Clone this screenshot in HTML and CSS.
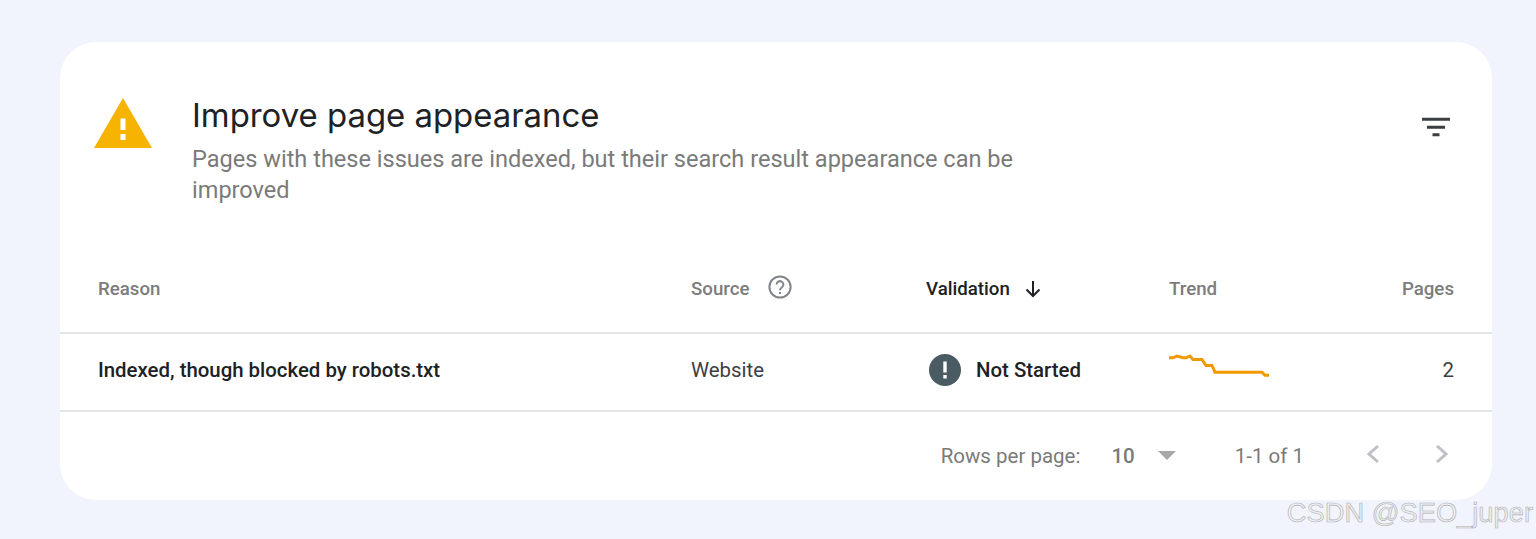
FILE: index.html
```html
<!DOCTYPE html>
<html lang="en">
<head>
<meta charset="utf-8">
<title>Improve page appearance</title>
<link rel="stylesheet" href="styles.css">
</head>
<body>
<main class="card">
  <header class="head">
    <svg class="warn" viewBox="0 0 58 50" aria-hidden="true"><path d="M29 0 58 50H0Z" fill="#f6b400"/><path d="M26.500 20.500h5v11.500h-5zM26.500 36h5v6h-5z" fill="#fff"/></svg>
    <div class="head-text">
      <h1 class="title">Improve page appearance</h1>
      <p class="sub">Pages with these issues are indexed, but their search result appearance can be improved</p>
    </div>
    <svg class="filter" viewBox="0 0 30 20" aria-hidden="true"><path d="M1 2.200h28M6 10.200h18M11.500 17.800h7" stroke="#3c4043" stroke-width="3" fill="none"/></svg>
  </header>
  <div class="row row-head">
    <div class="c-reason">Reason</div>
    <div class="c-source">Source
      <svg class="help" viewBox="0 0 24 24" aria-hidden="true"><circle cx="12" cy="12" r="10.600" fill="none" stroke="#80868b" stroke-width="2"/><path d="M8.600 9.500a3.400 3.400 0 1 1 5.400 2.800c-1.300.9-2 1.500-2 3" fill="none" stroke="#80868b" stroke-width="2"/><path d="M11 17h2v2h-2z" fill="#80868b"/></svg>
    </div>
    <div class="c-valid sorted">Validation
      <svg class="arrow" viewBox="0 0 18 18" aria-hidden="true"><path d="M9 1v15M2.500 9.500 9 16l6.500-6.500" fill="none" stroke="#202124" stroke-width="2"/></svg>
    </div>
    <div class="c-trend">Trend</div>
    <div class="c-pages">Pages</div>
  </div>
  <div class="row row-body">
    <div class="c-reason strong">Indexed, though blocked by robots.txt</div>
    <div class="c-source">Website</div>
    <div class="c-valid status">
      <svg class="state" viewBox="0 0 32 32" aria-hidden="true"><circle cx="16" cy="16" r="16" fill="#4a5b64"/><path d="M14.300 7.500h3.400v11h-3.400zM14.300 21h3.400v3.500h-3.400z" fill="#fff"/></svg>
      <span>Not Started</span>
    </div>
    <div class="c-trend">
      <svg class="spark" viewBox="0 0 102 24" aria-hidden="true"><path d="M0 3.800H4L8 2 14 3.800H17L21 2 24 5.500H33L37 11.500H43L46 18.200H93L96 21.200H100" fill="none" stroke="#f29900" stroke-width="3"/></svg>
    </div>
    <div class="c-pages">2</div>
  </div>
  <footer class="foot">
    <span class="rpp">Rows per page:</span>
    <span class="num">10</span>
    <svg class="caret" viewBox="0 0 18 9" aria-hidden="true"><path d="M0 0h18L9 9Z" fill="#a8a8a8"/></svg>
    <span class="range">1-1 of 1</span>
    <svg class="chev" viewBox="0 0 14 20" aria-hidden="true"><path d="M12 2 3 10l9 8" fill="none" stroke="#bdc1c6" stroke-width="3"/></svg>
    <svg class="chev next" viewBox="0 0 14 20" aria-hidden="true"><path d="M2 2l9 8-9 8" fill="none" stroke="#bdc1c6" stroke-width="3"/></svg>
  </footer>
</main>
<div class="mark">CSDN @SEO_juper</div>
</body>
</html>
```
FILE: styles.css
```css
html, body {
  margin: 0;
  height: 539px;
  overflow: hidden;
}
body {
  background: #f1f4fc;
  font-family: Roboto, "Liberation Sans", sans-serif;
  padding: 42px 44px 0 60px;
  box-sizing: border-box;
  position: relative;
}
.card {
  background: #fff;
  border-radius: 36px;
  height: 458px;
  display: flex;
  flex-direction: column;
}
.head {
  display: flex;
  align-items: flex-start;
  height: 213px;
  padding: 0 41px 0 34px;
  box-sizing: border-box;
  margin-bottom: 20px;
}
.warn {
  width: 58px;
  height: 50px;
  margin-top: 56px;
  flex: none;
}
.head-text {
  width: 840px;
  margin-left: 40px;
  padding-top: 53px;
}
.title {
  margin: 0;
  font-family: Inter, Roboto, sans-serif;
  font-size: 32.900px;
  font-weight: 400;
  line-height: 40px;
  color: #202124;
}
.sub {
  margin: 9px 0 0;
  font-size: 23.550px;
  line-height: 31px;
  color: #7a7a7a;
}
.filter {
  width: 30px;
  height: 20px;
  margin-left: auto;
  margin-top: 75px;
}
.row {
  display: grid;
  grid-template-columns: 593px 235px 243px 1fr 100px;
  padding: 0 38px;
  align-items: center;
  font-size: 18.700px;
  border-bottom: 2px solid #e3e5e8;
  box-sizing: border-box;
}
.row-head {
  height: 59px;
  padding-bottom: 29px;
  font-weight: 500;
  color: #7c7c7c;
}
.row-body {
  height: 78px;
  padding-bottom: 4px;
  font-size: 20.400px;
  color: #3c4043;
}
.row-head > div, .c-valid {
  display: flex;
  align-items: center;
}
.help {
  width: 24px;
  height: 24px;
  margin-left: 18px;
  margin-top: -4px;
}
.sorted {
  color: #202124;
}
.arrow {
  width: 18px;
  height: 18px;
  margin-left: 14px;
}
.strong {
  font-weight: 500;
  color: #202124;
}
.status {
  font-weight: 500;
  color: #202124;
}
.state {
  width: 32px;
  height: 32px;
  margin: 0 15px 0 3px;
}
.spark {
  display: block;
  width: 102px;
  height: 24px;
  margin-top: -8px;
}
.c-pages, .row-head .c-pages {
  justify-content: flex-end;
  text-align: right;
}
.foot {
  display: flex;
  align-items: center;
  height: 87px;
  padding: 0 43px 0 0;
  box-sizing: border-box;
  justify-content: flex-end;
  font-size: 20.500px;
  color: #7a7a7a;
}
.num {
  margin-left: 31px;
  font-weight: 500;
}
.caret {
  width: 18px;
  height: 9px;
  margin-left: 23px;
}
.range {
  margin-left: 59px;
}
.chev {
  width: 14px;
  height: 20px;
  margin-left: 62px;
  margin-top: -4px;
}
.chev.next {
  margin-left: 55px;
}
.mark {
  position: absolute;
  right: 3px;
  top: 495px;
  font-family: "Liberation Sans", sans-serif;
  font-size: 27.300px;
  line-height: 36px;
  color: #eceef2;
  -webkit-text-stroke: 0.6px #b0b0b0;
  white-space: nowrap;
}
```
